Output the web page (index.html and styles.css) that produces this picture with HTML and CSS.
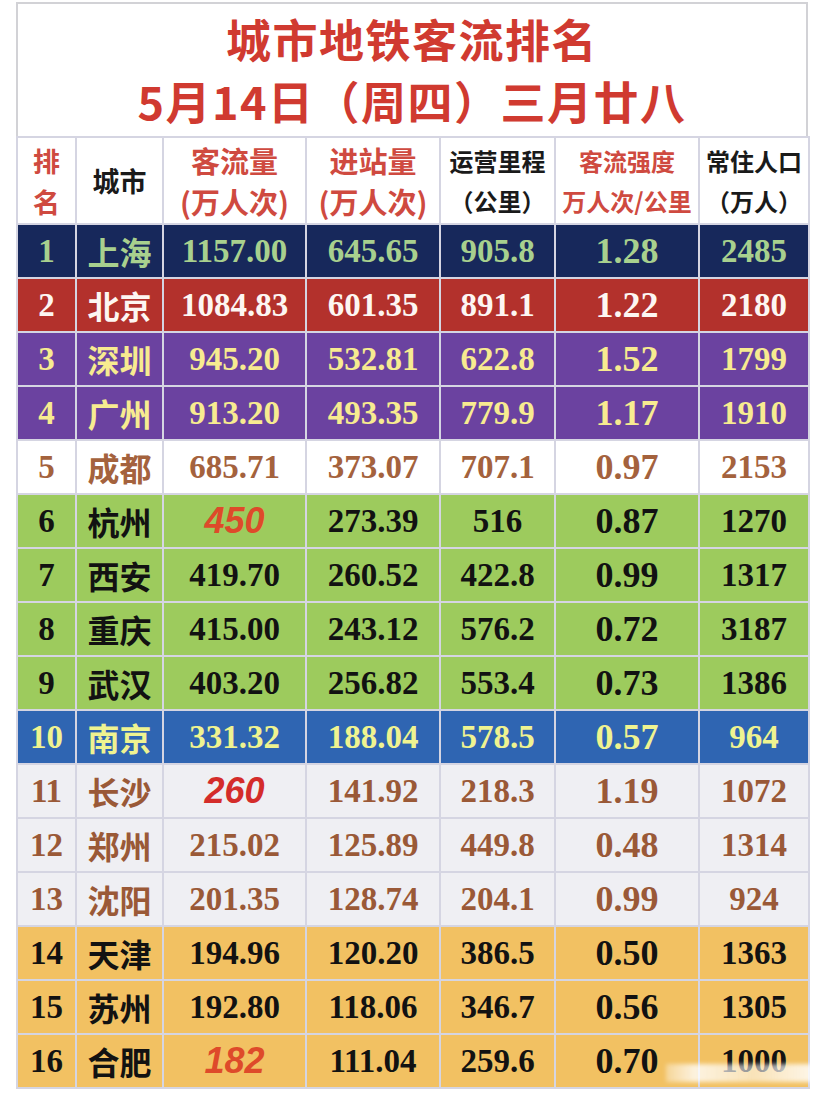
FILE: index.html
```html
<!DOCTYPE html>
<html lang="zh-CN">
<head>
<meta charset="utf-8">
<title>城市地铁客流排名</title>
<link rel="stylesheet" href="styles.css">
</head>
<body>
<div class="page">
  <div class="title-box">
    <div class="title-line">城市地铁客流排名</div>
    <div class="title-line">5月14日（周四）三月廿八</div>
  </div>
  <table class="rank">
    <colgroup>
      <col class="c1"><col class="c2"><col class="c3"><col class="c4"><col class="c5"><col class="c6"><col class="c7">
    </colgroup>
    <thead>
      <tr>
        <th class="h-red h-rank">排<br>名</th>
        <th class="h-black h-city">城市</th>
        <th class="h-red h-big">客流量<br>(万人次)</th>
        <th class="h-red h-big">进站量<br>(万人次)</th>
        <th class="h-black h-small">运营里程<br>（公里）</th>
        <th class="h-red h-small">客流强度<br>万人次/公里</th>
        <th class="h-black h-small">常住人口<br>（万人）</th>
      </tr>
    </thead>
    <tbody>
      <tr class="r-navy"><td>1</td><td class="city">上海</td><td>1157.00</td><td>645.65</td><td>905.8</td><td class="big">1.28</td><td>2485</td></tr>
      <tr class="r-red"><td>2</td><td class="city">北京</td><td>1084.83</td><td>601.35</td><td>891.1</td><td class="big">1.22</td><td>2180</td></tr>
      <tr class="r-purple"><td>3</td><td class="city">深圳</td><td>945.20</td><td>532.81</td><td>622.8</td><td class="big">1.52</td><td>1799</td></tr>
      <tr class="r-purple"><td>4</td><td class="city">广州</td><td>913.20</td><td>493.35</td><td>779.9</td><td class="big">1.17</td><td>1910</td></tr>
      <tr class="r-white"><td>5</td><td class="city">成都</td><td>685.71</td><td>373.07</td><td>707.1</td><td class="big">0.97</td><td>2153</td></tr>
      <tr class="r-green"><td>6</td><td class="city">杭州</td><td class="est est-orange">450</td><td>273.39</td><td>516</td><td class="big">0.87</td><td>1270</td></tr>
      <tr class="r-green"><td>7</td><td class="city">西安</td><td>419.70</td><td>260.52</td><td>422.8</td><td class="big">0.99</td><td>1317</td></tr>
      <tr class="r-green"><td>8</td><td class="city">重庆</td><td>415.00</td><td>243.12</td><td>576.2</td><td class="big">0.72</td><td>3187</td></tr>
      <tr class="r-green"><td>9</td><td class="city">武汉</td><td>403.20</td><td>256.82</td><td>553.4</td><td class="big">0.73</td><td>1386</td></tr>
      <tr class="r-blue"><td>10</td><td class="city">南京</td><td>331.32</td><td>188.04</td><td>578.5</td><td class="big">0.57</td><td>964</td></tr>
      <tr class="r-gray"><td>11</td><td class="city">长沙</td><td class="est est-red">260</td><td>141.92</td><td>218.3</td><td class="big">1.19</td><td>1072</td></tr>
      <tr class="r-gray"><td>12</td><td class="city">郑州</td><td>215.02</td><td>125.89</td><td>449.8</td><td class="big">0.48</td><td>1314</td></tr>
      <tr class="r-gray"><td>13</td><td class="city">沈阳</td><td>201.35</td><td>128.74</td><td>204.1</td><td class="big">0.99</td><td>924</td></tr>
      <tr class="r-gold"><td>14</td><td class="city">天津</td><td>194.96</td><td>120.20</td><td>386.5</td><td class="big">0.50</td><td>1363</td></tr>
      <tr class="r-gold"><td>15</td><td class="city">苏州</td><td>192.80</td><td>118.06</td><td>346.7</td><td class="big">0.56</td><td>1305</td></tr>
      <tr class="r-gold"><td>16</td><td class="city">合肥</td><td class="est est-orange">182</td><td>111.04</td><td>259.6</td><td class="big">0.70</td><td>1000</td></tr>
    </tbody>
  </table>
  <div class="smudge"></div>
</div>
</body>
</html>
```

FILE: styles.css
```css
html, body {
  margin: 0;
  padding: 0;
  background: #ffffff;
}

.page {
  position: relative;
  width: 792px;
  margin-left: 16px;
  padding-top: 2px;
  font-family: "Noto Sans CJK SC", "Noto Sans", sans-serif;
}

.title-box {
  box-sizing: border-box;
  height: 134px;
  border: 2px solid #d2d2d6;
  border-bottom: none;
  display: flex;
  flex-direction: column;
  align-items: center;
  justify-content: center;
  gap: 4px;
  color: #d03a30;
  font-weight: 700;
  font-size: 45px;
  line-height: 58px;
}

.title-line {
  letter-spacing: 1.5px;
}

.rank {
  border-collapse: collapse;
  table-layout: fixed;
  width: 792px;
}

.c1 { width: 59px; }
.c2 { width: 87px; }
.c3 { width: 143px; }
.c4 { width: 134px; }
.c5 { width: 115px; }
.c6 { width: 144px; }
.c7 { width: 110px; }

.rank th,
.rank td {
  border: 2px solid #d5d5e2;
  padding: 0;
  text-align: center;
  vertical-align: middle;
  white-space: nowrap;
}

.rank th {
  height: 85px;
  background: #ffffff;
  font-family: "Noto Sans CJK SC", "Noto Sans", sans-serif;
  font-weight: 700;
}

.h-red { color: #cf4a40; }
.h-black { color: #1a1a1a; }

.h-rank {
  font-size: 27px;
  line-height: 41px;
}

.h-city {
  font-size: 27px;
  line-height: 30px;
}

.h-big {
  font-size: 29px;
  line-height: 41px;
}

.h-small {
  font-size: 24px;
  line-height: 40px;
  letter-spacing: 0;
}

.rank td {
  height: 52px;
  font-family: "Liberation Serif", "Times New Roman", serif;
  font-weight: 700;
  font-size: 33px;
  line-height: 40px;
}

.rank td.big {
  font-size: 36px;
}

.rank td.city {
  font-family: "Noto Sans CJK SC", "Noto Sans", sans-serif;
  font-weight: 700;
  font-size: 32px;
  letter-spacing: 0;
}

.rank td.est {
  font-family: "Liberation Sans", Arial, sans-serif;
  font-style: italic;
  font-weight: 700;
  font-size: 36px;
}

.est-orange { color: #de4a2a !important; }
.est-red { color: #d42c2a !important; }

.r-navy td { background: #17285b; color: #a8d08e; }
.r-red td { background: #b3312c; color: #fdf6f2; }
.r-purple td { background: #6b42a0; color: #f7eb90; }
.r-white td { background: #ffffff; color: #a4623d; }
.r-green td { background: #9dcb5d; color: #121212; }
.r-blue td { background: #2f65b2; color: #eff390; }
.r-gray td { background: #efeff3; color: #9a5937; }
.r-gold td { background: #f2c162; color: #121212; }

.smudge {
  position: absolute;
  left: 650px;
  top: 1064px;
  width: 146px;
  height: 18px;
  background: linear-gradient(90deg, rgba(255,255,255,0.35), rgba(255,255,255,0.8) 20%, rgba(255,255,255,0.55) 60%, rgba(255,255,255,0.85));
  filter: blur(2px);
}
```
